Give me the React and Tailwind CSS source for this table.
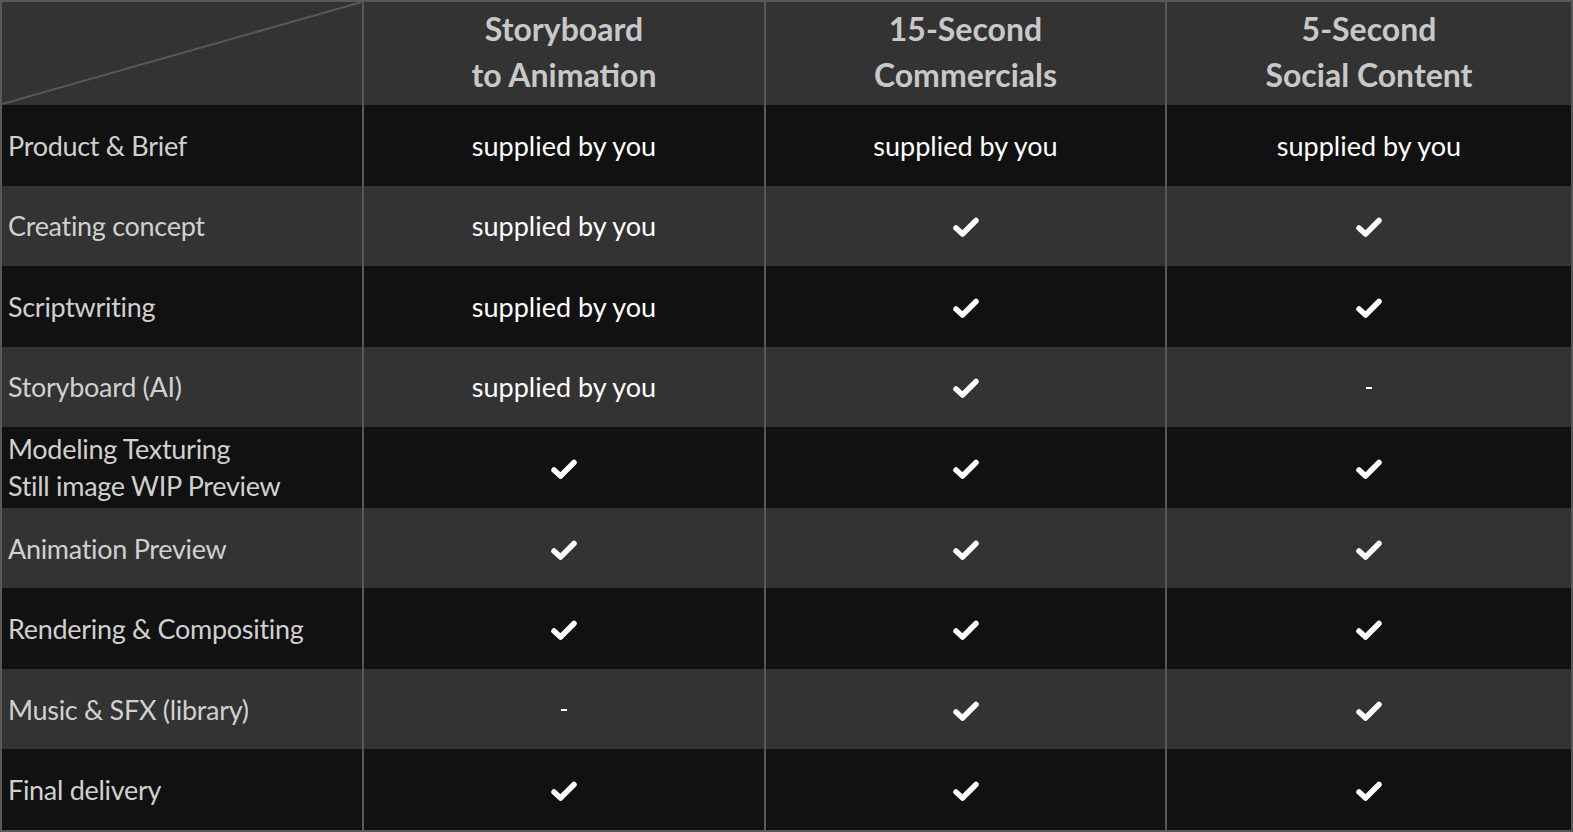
import React from "react";

const cols = [
  ["Storyboard", "to Animation"],
  ["15-Second", "Commercials"],
  ["5-Second", "Social Content"],
];

const S = "supplied by you";
const C = "check";
const D = "-";

const rows = [
  [["Product & Brief"], S, S, S],
  [["Creating concept"], S, C, C],
  [["Scriptwriting"], S, C, C],
  [["Storyboard (AI)"], S, C, D],
  [["Modeling Texturing", "Still image WIP Preview"], C, C, C],
  [["Animation Preview"], C, C, C],
  [["Rendering & Compositing"], C, C, C],
  [["Music & SFX (library)"], D, C, C],
  [["Final delivery"], C, C, C],
];

function Check() {
  return (
    <svg width="28" height="22" viewBox="0 0 28 22" className="mt-[3px]">
      <polyline
        points="4,12 10.5,18 24,4.5"
        fill="none"
        stroke="#fff"
        strokeWidth="5.5"
        strokeLinecap="round"
        strokeLinejoin="round"
      />
    </svg>
  );
}

function Cell({ v }) {
  if (v === C) return <Check />;
  if (v === D) return <span className="block w-[6px] h-[2px] bg-white mt-[2px]" />;
  return <span className="text-white text-[27px] leading-none">{v}</span>;
}

export default function App() {
  return (
    <div
      className="w-[1573px] h-[832px] border-2 border-[#585858] bg-[#111] grid grid-cols-[360px_402px_401px_406px] grid-rows-[103px_repeat(9,1fr)] overflow-hidden"
      style={{ fontFamily: "Lato, 'Noto Sans', sans-serif" }}
    >
      <div className="relative bg-[#333]">
        <svg className="absolute inset-0" width="360" height="103" viewBox="0 0 360 103">
          <line x1="0" y1="102" x2="360" y2="0" stroke="#585858" strokeWidth="2" />
        </svg>
      </div>
      {cols.map((c, i) => (
        <div
          key={i}
          className="bg-[#333] border-l-2 border-[#585858] flex flex-col items-center justify-center text-[#c8c8c8] font-bold text-[32px] leading-[46px] pb-[3px]"
        >
          <span>{c[0]}</span>
          <span>{c[1]}</span>
        </div>
      ))}
      {rows.map((r, ri) => {
        const bg = ri % 2 === 0 ? "bg-[#111]" : "bg-[#333]";
        return (
          <React.Fragment key={ri}>
            <div className={`${bg} flex flex-col justify-center pl-[6px] text-[#d0d0d0] text-[27px] tracking-[-0.3px] leading-[37px]`}>
              {r[0].map((t, k) => (
                <span key={k}>{t}</span>
              ))}
            </div>
            {r.slice(1).map((v, k) => (
              <div key={k} className={`${bg} border-l-2 border-[#585858] flex items-center justify-center`}>
                <Cell v={v} />
              </div>
            ))}
          </React.Fragment>
        );
      })}
    </div>
  );
}
